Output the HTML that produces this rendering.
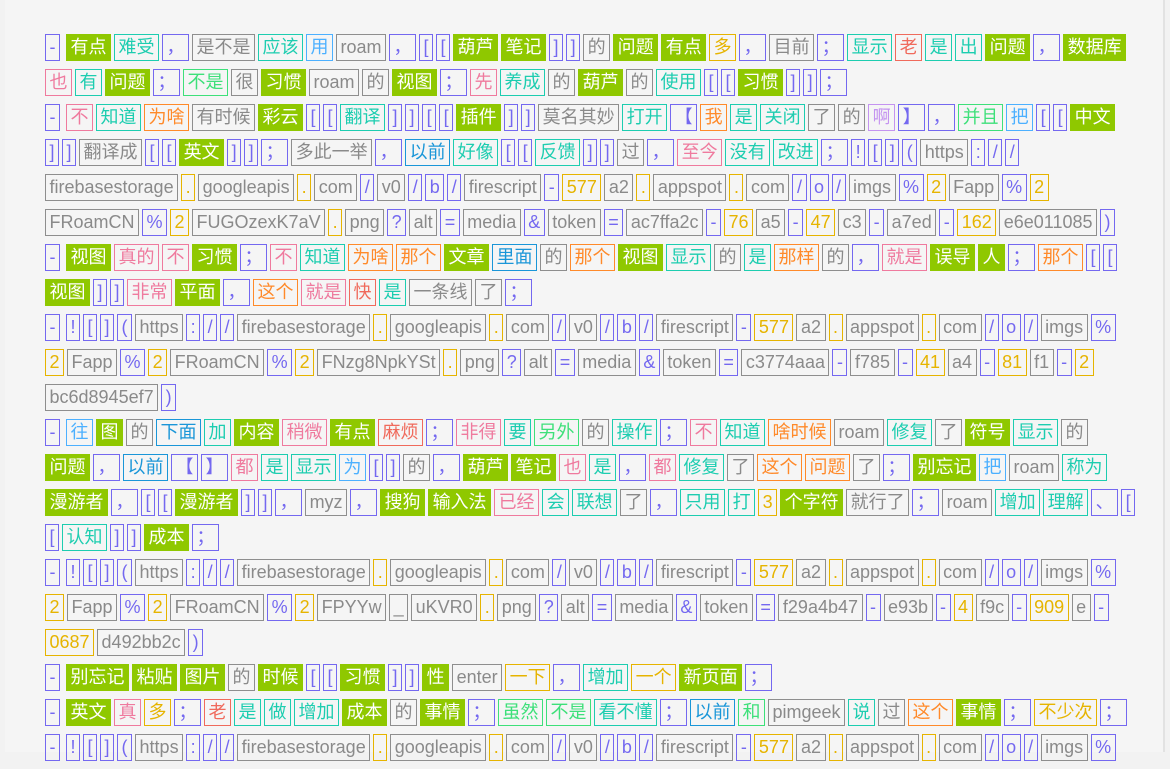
<!DOCTYPE html>
<html><head><meta charset="utf-8"><style>
html,body{margin:0;padding:0;background:#f2f2f2;width:1170px;height:752px;overflow:hidden}
.wrap{position:absolute;left:5px;top:0;width:1158px;height:752px;background:#f5f5f5;border-right:2px solid #e2e2e2}
.c{position:absolute;left:45px;top:34px;font-family:"Liberation Sans","Noto Sans CJK SC",sans-serif;font-size:18px}
.r{height:35px;white-space:nowrap}
i{font-style:normal;display:inline-block;vertical-align:top;height:25px;line-height:25px;padding:0 3.5px;border:1px solid;margin-right:3px;color:#8a8a8a;border-color:#8e8e8e}
i.p{color:#7468f0;border-color:#7468f0}
i.t{color:#1dcdb0;border-color:#1dcdb0}
i.g{color:#fff;background:#8fc800;border-color:#8fc800}
i.w{color:#e6b400;border-color:#e6b400}
i.b{color:#4cb0ff;border-color:#4cb0ff}
i.d{color:#1a96d8;border-color:#1a96d8}
i.k{color:#ef7a9e;border-color:#ef7a9e}
i.o{color:#ff8a2a;border-color:#ff8a2a}
i.r2{color:#f06a5c;border-color:#f06a5c}
i.l{color:#3ee07a;border-color:#3ee07a}
i.v{color:#c493f0;border-color:#c493f0}
i.ds{margin-right:6px}
</style></head><body><div class="wrap"></div><div class="c">
<div class="r"><i class="p ds">-</i><i class="g">有点</i><i class="t">难受</i><i class="p">，</i><i>是不是</i><i class="t">应该</i><i class="b">用</i><i>roam</i><i class="p">，</i><i class="p">[</i><i class="p">[</i><i class="g">葫芦</i><i class="g">笔记</i><i class="p">]</i><i class="p">]</i><i>的</i><i class="g">问题</i><i class="g">有点</i><i class="w">多</i><i class="p">，</i><i>目前</i><i class="p">；</i><i class="t">显示</i><i class="r2">老</i><i class="t">是</i><i class="t">出</i><i class="g">问题</i><i class="p">，</i><i class="g">数据库</i></div>
<div class="r"><i class="k">也</i><i class="t">有</i><i class="g">问题</i><i class="p">；</i><i class="l">不是</i><i>很</i><i class="g">习惯</i><i>roam</i><i>的</i><i class="g">视图</i><i class="p">；</i><i class="k">先</i><i class="t">养成</i><i>的</i><i class="g">葫芦</i><i>的</i><i class="t">使用</i><i class="p">[</i><i class="p">[</i><i class="g">习惯</i><i class="p">]</i><i class="p">]</i><i class="p">；</i></div>
<div class="r"><i class="p ds">-</i><i class="k">不</i><i class="t">知道</i><i class="o">为啥</i><i>有时候</i><i class="g">彩云</i><i class="p">[</i><i class="p">[</i><i class="t">翻译</i><i class="p">]</i><i class="p">]</i><i class="p">[</i><i class="p">[</i><i class="g">插件</i><i class="p">]</i><i class="p">]</i><i>莫名其妙</i><i class="t">打开</i><i class="p">【</i><i class="o">我</i><i class="t">是</i><i class="t">关闭</i><i>了</i><i>的</i><i class="v">啊</i><i class="p">】</i><i class="p">，</i><i class="l">并且</i><i class="b">把</i><i class="p">[</i><i class="p">[</i><i class="g">中文</i></div>
<div class="r"><i class="p">]</i><i class="p">]</i><i>翻译成</i><i class="p">[</i><i class="p">[</i><i class="g">英文</i><i class="p">]</i><i class="p">]</i><i class="p">；</i><i>多此一举</i><i class="p">，</i><i class="d">以前</i><i class="t">好像</i><i class="p">[</i><i class="p">[</i><i class="t">反馈</i><i class="p">]</i><i class="p">]</i><i>过</i><i class="p">，</i><i class="k">至今</i><i class="t">没有</i><i class="t">改进</i><i class="p">；</i><i class="p">!</i><i class="p">[</i><i class="p">]</i><i class="p">(</i><i>https</i><i class="p">:</i><i class="p">/</i><i class="p">/</i></div>
<div class="r"><i>firebasestorage</i><i class="w">.</i><i>googleapis</i><i class="w">.</i><i>com</i><i class="p">/</i><i>v0</i><i class="p">/</i><i class="p">b</i><i class="p">/</i><i>firescript</i><i class="p">-</i><i class="w">577</i><i>a2</i><i class="w">.</i><i>appspot</i><i class="w">.</i><i>com</i><i class="p">/</i><i class="p">o</i><i class="p">/</i><i>imgs</i><i class="p">%</i><i class="w">2</i><i>Fapp</i><i class="p">%</i><i class="w">2</i></div>
<div class="r"><i>FRoamCN</i><i class="p">%</i><i class="w">2</i><i>FUGOzexK7aV</i><i class="w">.</i><i>png</i><i class="p">?</i><i>alt</i><i class="p">=</i><i>media</i><i class="p">&amp;</i><i>token</i><i class="p">=</i><i>ac7ffa2c</i><i class="p">-</i><i class="w">76</i><i>a5</i><i class="p">-</i><i class="w">47</i><i>c3</i><i class="p">-</i><i>a7ed</i><i class="p">-</i><i class="w">162</i><i>e6e011085</i><i class="p">)</i></div>
<div class="r"><i class="p ds">-</i><i class="g">视图</i><i class="k">真的</i><i class="k">不</i><i class="g">习惯</i><i class="p">；</i><i class="k">不</i><i class="t">知道</i><i class="o">为啥</i><i class="o">那个</i><i class="g">文章</i><i class="d">里面</i><i>的</i><i class="o">那个</i><i class="g">视图</i><i class="t">显示</i><i>的</i><i class="t">是</i><i class="o">那样</i><i>的</i><i class="p">，</i><i class="k">就是</i><i class="g">误导</i><i class="g">人</i><i class="p">；</i><i class="o">那个</i><i class="p">[</i><i class="p">[</i></div>
<div class="r"><i class="g">视图</i><i class="p">]</i><i class="p">]</i><i class="k">非常</i><i class="g">平面</i><i class="p">，</i><i class="o">这个</i><i class="k">就是</i><i class="r2">快</i><i class="t">是</i><i>一条线</i><i>了</i><i class="p">；</i></div>
<div class="r"><i class="p ds">-</i><i class="p">!</i><i class="p">[</i><i class="p">]</i><i class="p">(</i><i>https</i><i class="p">:</i><i class="p">/</i><i class="p">/</i><i>firebasestorage</i><i class="w">.</i><i>googleapis</i><i class="w">.</i><i>com</i><i class="p">/</i><i>v0</i><i class="p">/</i><i class="p">b</i><i class="p">/</i><i>firescript</i><i class="p">-</i><i class="w">577</i><i>a2</i><i class="w">.</i><i>appspot</i><i class="w">.</i><i>com</i><i class="p">/</i><i class="p">o</i><i class="p">/</i><i>imgs</i><i class="p">%</i></div>
<div class="r"><i class="w">2</i><i>Fapp</i><i class="p">%</i><i class="w">2</i><i>FRoamCN</i><i class="p">%</i><i class="w">2</i><i>FNzg8NpkYSt</i><i class="w">.</i><i>png</i><i class="p">?</i><i>alt</i><i class="p">=</i><i>media</i><i class="p">&amp;</i><i>token</i><i class="p">=</i><i>c3774aaa</i><i class="p">-</i><i>f785</i><i class="p">-</i><i class="w">41</i><i>a4</i><i class="p">-</i><i class="w">81</i><i>f1</i><i class="p">-</i><i class="w">2</i></div>
<div class="r"><i>bc6d8945ef7</i><i class="p">)</i></div>
<div class="r"><i class="p ds">-</i><i class="b">往</i><i class="g">图</i><i>的</i><i class="d">下面</i><i class="t">加</i><i class="g">内容</i><i class="k">稍微</i><i class="g">有点</i><i class="r2">麻烦</i><i class="p">；</i><i class="k">非得</i><i class="t">要</i><i class="l">另外</i><i>的</i><i class="t">操作</i><i class="p">；</i><i class="k">不</i><i class="t">知道</i><i class="o">啥时候</i><i>roam</i><i class="t">修复</i><i>了</i><i class="g">符号</i><i class="t">显示</i><i>的</i></div>
<div class="r"><i class="g">问题</i><i class="p">，</i><i class="d">以前</i><i class="p">【</i><i class="p">】</i><i class="k">都</i><i class="t">是</i><i class="t">显示</i><i class="b">为</i><i class="p">[</i><i class="p">]</i><i>的</i><i class="p">，</i><i class="g">葫芦</i><i class="g">笔记</i><i class="k">也</i><i class="t">是</i><i class="p">，</i><i class="k">都</i><i class="t">修复</i><i>了</i><i class="o">这个</i><i class="o">问题</i><i>了</i><i class="p">；</i><i class="g">别忘记</i><i class="b">把</i><i>roam</i><i class="t">称为</i></div>
<div class="r"><i class="g">漫游者</i><i class="p">，</i><i class="p">[</i><i class="p">[</i><i class="g">漫游者</i><i class="p">]</i><i class="p">]</i><i class="p">，</i><i>myz</i><i class="p">，</i><i class="g">搜狗</i><i class="g">输入法</i><i class="k">已经</i><i class="t">会</i><i class="t">联想</i><i>了</i><i class="p">，</i><i class="t">只用</i><i class="t">打</i><i class="w">3</i><i class="g">个字符</i><i>就行了</i><i class="p">；</i><i>roam</i><i class="t">增加</i><i class="t">理解</i><i class="p">、</i><i class="p">[</i></div>
<div class="r"><i class="p">[</i><i class="t">认知</i><i class="p">]</i><i class="p">]</i><i class="g">成本</i><i class="p">；</i></div>
<div class="r"><i class="p ds">-</i><i class="p">!</i><i class="p">[</i><i class="p">]</i><i class="p">(</i><i>https</i><i class="p">:</i><i class="p">/</i><i class="p">/</i><i>firebasestorage</i><i class="w">.</i><i>googleapis</i><i class="w">.</i><i>com</i><i class="p">/</i><i>v0</i><i class="p">/</i><i class="p">b</i><i class="p">/</i><i>firescript</i><i class="p">-</i><i class="w">577</i><i>a2</i><i class="w">.</i><i>appspot</i><i class="w">.</i><i>com</i><i class="p">/</i><i class="p">o</i><i class="p">/</i><i>imgs</i><i class="p">%</i></div>
<div class="r"><i class="w">2</i><i>Fapp</i><i class="p">%</i><i class="w">2</i><i>FRoamCN</i><i class="p">%</i><i class="w">2</i><i>FPYYw</i><i>_</i><i>uKVR0</i><i class="w">.</i><i>png</i><i class="p">?</i><i>alt</i><i class="p">=</i><i>media</i><i class="p">&amp;</i><i>token</i><i class="p">=</i><i>f29a4b47</i><i class="p">-</i><i>e93b</i><i class="p">-</i><i class="w">4</i><i>f9c</i><i class="p">-</i><i class="w">909</i><i>e</i><i class="p">-</i></div>
<div class="r"><i class="w">0687</i><i>d492bb2c</i><i class="p">)</i></div>
<div class="r"><i class="p ds">-</i><i class="g">别忘记</i><i class="g">粘贴</i><i class="g">图片</i><i>的</i><i class="g">时候</i><i class="p">[</i><i class="p">[</i><i class="g">习惯</i><i class="p">]</i><i class="p">]</i><i class="g">性</i><i>enter</i><i class="w">一下</i><i class="p">，</i><i class="t">增加</i><i class="w">一个</i><i class="g">新页面</i><i class="p">；</i></div>
<div class="r"><i class="p ds">-</i><i class="g">英文</i><i class="k">真</i><i class="w">多</i><i class="p">；</i><i class="r2">老</i><i class="t">是</i><i class="t">做</i><i class="t">增加</i><i class="g">成本</i><i>的</i><i class="g">事情</i><i class="p">；</i><i class="l">虽然</i><i class="l">不是</i><i class="t">看不懂</i><i class="p">；</i><i class="d">以前</i><i class="l">和</i><i>pimgeek</i><i class="t">说</i><i>过</i><i class="o">这个</i><i class="g">事情</i><i class="p">；</i><i class="w">不少次</i><i class="p">；</i></div>
<div class="r"><i class="p ds">-</i><i class="p">!</i><i class="p">[</i><i class="p">]</i><i class="p">(</i><i>https</i><i class="p">:</i><i class="p">/</i><i class="p">/</i><i>firebasestorage</i><i class="w">.</i><i>googleapis</i><i class="w">.</i><i>com</i><i class="p">/</i><i>v0</i><i class="p">/</i><i class="p">b</i><i class="p">/</i><i>firescript</i><i class="p">-</i><i class="w">577</i><i>a2</i><i class="w">.</i><i>appspot</i><i class="w">.</i><i>com</i><i class="p">/</i><i class="p">o</i><i class="p">/</i><i>imgs</i><i class="p">%</i></div>
</div></body></html>
